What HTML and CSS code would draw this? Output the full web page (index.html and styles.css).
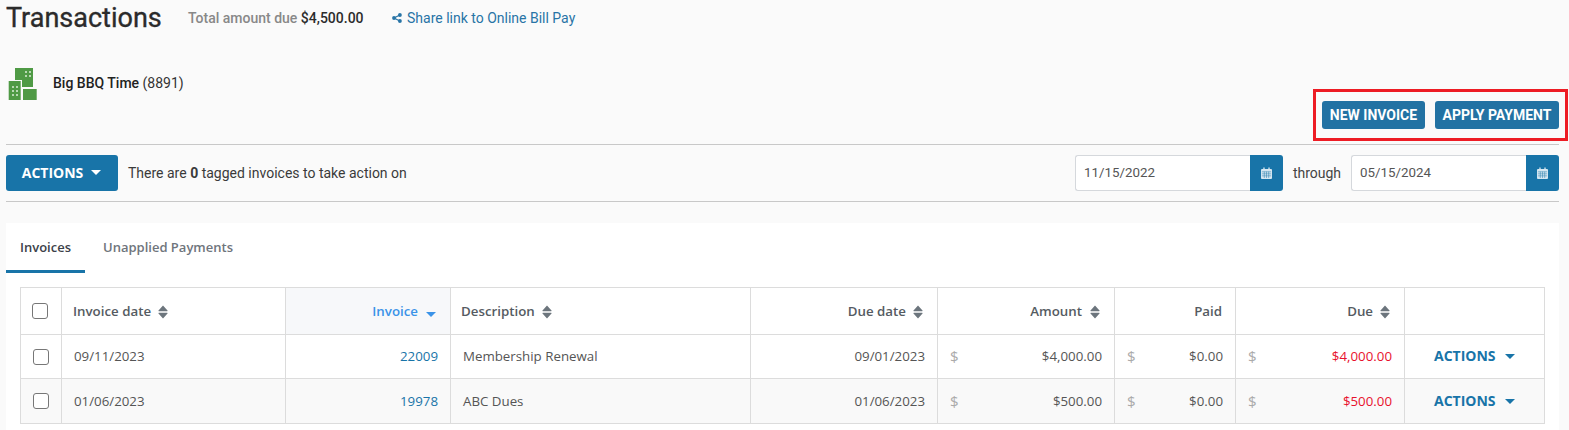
FILE: index.html
```html
<!DOCTYPE html>
<html lang="en">
<head>
<meta charset="utf-8">
<title>Transactions</title>
<link rel="stylesheet" href="styles.css">
</head>
<body>
<svg class="defs" width="0" height="0" aria-hidden="true">
  <symbol id="sort" viewBox="0 0 10 14"><path d="M5 0.5 9.5 5.5Q10 6.2 9 6.2H1Q0 6.2 .5 5.5Z M5 13.5 9.5 8.5Q10 7.8 9 7.8H1Q0 7.8 .5 8.5Z" fill="currentColor"/></symbol>
  <symbol id="cal" viewBox="0 0 12 13"><path d="M1 2h10a1 1 0 0 1 1 1v9a1 1 0 0 1-1 1H1a1 1 0 0 1-1-1V3a1 1 0 0 1 1-1z" fill="currentColor"/><path d="M2.5 0.5h1.500v2.500H2.500zM8 0.5h1.500v2.500H8z" fill="currentColor"/><path d="M1 5.200h10M1 7.400h10M1 9.600h10M3.600 5v7M6 5v7M8.400 5v7" stroke="#1874a8" stroke-width=".5" fill="none"/></symbol>
</svg>
<div class="page">
  <header class="top">
    <h1>Transactions</h1>
    <span class="total">Total amount due <b>$4,500.00</b></span>
    <a class="share" href="#">
      <svg width="10" height="10" viewBox="0 0 10 10"><path d="M7.800 2 2 5l5.800 3" stroke="currentColor" stroke-width="1.200" fill="none"/><circle cx="7.900" cy="2" r="1.900" fill="currentColor"/><circle cx="2" cy="5" r="1.900" fill="currentColor"/><circle cx="7.900" cy="8" r="1.900" fill="currentColor"/></svg>
      Share link to Online Bill Pay
    </a>
  </header>
  <div class="client">
    <svg class="bldg" width="30" height="32" viewBox="0 0 30 32">
      <path d="M7 0H25V19H14V12H7Z" fill="#4f9a45"/>
      <rect x="0.700" y="13" width="12" height="19" fill="#4f9a45"/>
      <rect x="15" y="21" width="13.700" height="11" fill="#4f9a45"/>
      <g fill="#b7d8b2">
        <rect x="17" y="3" width="2" height="2"/><rect x="21" y="3" width="2" height="2"/>
        <rect x="17" y="7" width="2" height="2"/><rect x="21" y="7" width="2" height="2"/>
        <rect x="4" y="18" width="2" height="2"/><rect x="8" y="18" width="2" height="2"/>
        <rect x="4" y="22" width="2" height="2"/><rect x="8" y="22" width="2" height="2"/>
        <rect x="4" y="26" width="2" height="2"/><rect x="8" y="26" width="2" height="2"/>
      </g>
    </svg>
    <span class="cname"><b>Big BBQ Time</b> (8891)</span>
  </div>
  <div class="btnrow">
    <div class="btns">
      <button class="btn">NEW INVOICE</button>
      <button class="btn">APPLY PAYMENT</button>
      <span class="mark"></span>
    </div>
  </div>
  <div class="toolbar">
    <button class="act">ACTIONS <i class="caret white"></i></button>
    <span class="tagged">There are <b>0</b> tagged invoices to take action on</span>
    <div class="dates">
      <div class="date"><input value="11/15/2022" aria-label="From"><span class="calbtn"><svg width="11" height="12"><use href="#cal"/></svg></span></div>
      <span class="thru">through</span>
      <div class="date"><input value="05/15/2024" aria-label="To"><span class="calbtn"><svg width="11" height="12"><use href="#cal"/></svg></span></div>
    </div>
  </div>
  <section class="card">
    <nav class="tabs">
      <a class="tab on" href="#">Invoices</a>
      <a class="tab" href="#">Unapplied Payments</a>
    </nav>
    <table>
      <colgroup>
        <col class="c1"><col class="c2"><col class="c3"><col class="c4"><col class="c5"><col class="c6"><col class="c7"><col class="c8"><col class="c9">
      </colgroup>
      <thead>
        <tr>
          <th class="chk"><input type="checkbox" aria-label="All"></th>
          <th>Invoice date<svg class="s"><use href="#sort"/></svg></th>
          <th class="r sorted">Invoice<i class="caret blue"></i></th>
          <th class="desc">Description<svg class="s"><use href="#sort"/></svg></th>
          <th class="r">Due date<svg class="s"><use href="#sort"/></svg></th>
          <th class="r amt">Amount<svg class="s"><use href="#sort"/></svg></th>
          <th class="r paid">Paid</th>
          <th class="r">Due<svg class="s"><use href="#sort"/></svg></th>
          <th></th>
        </tr>
      </thead>
      <tbody>
        <tr>
          <td class="chk"><input type="checkbox" aria-label="Select"></td>
          <td>09/11/2023</td>
          <td class="r"><a href="#">22009</a></td>
          <td>Membership Renewal</td>
          <td class="r">09/01/2023</td>
          <td><div class="money"><span>$</span>$4,000.00</div></td>
          <td><div class="money"><span>$</span>$0.00</div></td>
          <td><div class="money red"><span>$</span>$4,000.00</div></td>
          <td class="rowact">ACTIONS<i class="caret dark"></i></td>
        </tr>
        <tr>
          <td class="chk"><input type="checkbox" aria-label="Select"></td>
          <td>01/06/2023</td>
          <td class="r"><a href="#">19978</a></td>
          <td>ABC Dues</td>
          <td class="r">01/06/2023</td>
          <td><div class="money"><span>$</span>$500.00</div></td>
          <td><div class="money"><span>$</span>$0.00</div></td>
          <td><div class="money red"><span>$</span>$500.00</div></td>
          <td class="rowact">ACTIONS<i class="caret dark"></i></td>
        </tr>
      </tbody>
    </table>
  </section>
</div>
</body>
</html>
```
FILE: styles.css
```css
* { box-sizing: border-box; }
html, body { margin: 0; height: 430px; overflow: hidden; }
body { background: #fafafa; font-family: Roboto, "Liberation Sans", sans-serif; color: #333; }
.defs { position: absolute; }
.top { display: flex; align-items: center; height: 36px; padding-left: 6px; }
h1 { margin: 0; font-size: 27px; font-weight: 400; -webkit-text-stroke: .35px #2b2b2b; color: #2b2b2b; line-height: 36px; width: 182px; }
.total { font-size: 14px; color: #888; width: 204px; font-weight: 500; }
.total b { color: #2b2b2b; font-weight: 500; }
.share { font-size: 14px; color: #2874a6; text-decoration: none; display: flex; align-items: center; gap: 5px; }
.client { display: flex; height: 33px; margin-top: 32px; padding-left: 8px; }
.bldg { display: block; }
.cname { font-size: 14px; margin-left: 15px; padding-top: 7px; color: #333; }
.cname b { font-weight: 500; color: #222; }
.btnrow { display: flex; justify-content: flex-end; height: 44px; border-bottom: 1px solid #c8c8c8; margin-left: 6px; margin-right: 10px; }
.btns { position: relative; display: flex; gap: 10px; height: 28px; }
.btn { height: 28px; border: 0; border-radius: 3px; background: #2272a3; color: #fff; font: 700 14px Roboto, sans-serif; padding: 0 0 1px; }
.btn:first-child { width: 103px; }
.btn:nth-child(2) { width: 124px; }
.mark { position: absolute; left: -9px; right: -9px; top: -12px; bottom: -12px; border: 3px solid #ed1c24; pointer-events: none; }
.toolbar { display: flex; align-items: center; height: 57px; margin: 0 10px 0 6px; border-bottom: 1px solid #c8c8c8; }
.act { width: 112px; height: 36px; border: 0; border-radius: 3px; background: #1874a8; color: #fff; font: 700 14px "Open Sans", sans-serif; padding: 0 1px 2px 0; display: flex; align-items: center; justify-content: center; gap: 8px; }
.tagged { font-size: 14px; margin-left: 10px; color: #3a3a3a; }
.tagged b { font-weight: 700; }
.dates { margin-left: auto; display: flex; align-items: center; }
.date { display: flex; }
.date input { width: 175px; height: 36px; border: 1px solid #d5d8dc; border-right: 0; border-radius: 3px 0 0 3px; background: #fff; font: 400 13.33px Roboto, sans-serif; color: #555; padding: 0 8px 2px; outline: 0; }
.calbtn { width: 33px; height: 36px; background: #1874a8; border-radius: 0 3px 3px 0; display: flex; align-items: center; justify-content: center; color: #d5e6f0; }
.thru { font-size: 14px; color: #444; width: 68px; text-align: center; }
.card { background: #fff; margin: 21px 10px 0 6px; height: 207px; }
.tabs { display: flex; height: 50px; font: 600 13px "Open Sans", sans-serif; }
.tab { color: #6f757c; text-decoration: none; padding-top: 15px; width: 79px; }
.tab.on { color: #3b4149; text-align: center; border-bottom: 3px solid #1874a8; margin-right: 18px; }
.tab + .tab { width: auto; }
table { border-collapse: collapse; table-layout: fixed; width: 1524px; margin: 14px 0 0 14px; font: 400 13.3px "Open Sans", sans-serif; color: #555; }
.c1 { width: 41px; } .c2 { width: 224px; } .c3 { width: 165px; } .c4 { width: 300px; } .c5 { width: 187px; } .c6 { width: 177px; } .c7 { width: 121px; } .c8 { width: 169px; } .c9 { width: 140px; }
th, td { border: 1px solid #dcdcdc; padding: 0 12px; height: 44px; text-align: left; }
th { height: 47px; font-weight: 600; color: #555b62; font-size: 13.3px; padding-left: 11px; }
th.desc { padding-left: 10px; }
tbody tr:first-child td { padding-bottom: 2px; }
tbody tr:first-child td.chk { padding-bottom: 0; }
tbody tr:nth-child(2) { background: #f9f9f9; }
tbody tr:nth-child(2) td { height: 45px; }
tbody tr:nth-child(2) td.rowact { padding-bottom: 2px; }
.r { text-align: right; }
th.r { padding-right: 14px; }
th.paid { padding-right: 13px; }
.chk { padding: 0 0 0 12px; }
.chk input { appearance: none; display: block; width: 16px; height: 16px; margin: 0; border: 1px solid #777; border-radius: 3px; background: #fff; }
th.chk { padding-left: 11px; }
.s { width: 10px; height: 14px; margin-left: 7px; vertical-align: -3px; color: #6c757d; }
.amt .s { margin-left: 8px; }
th.sorted { background: #f7f8fa; color: #3b93e8; }
td a { color: #1874a8; text-decoration: none; }
.money { display: flex; justify-content: space-between; }
.money span { color: #aaa; font-size: 15px; line-height: 18px; }
.red { color: #e8112d; }
.rowact { padding-left: 29px; font-weight: 700; font-size: 14px; color: #1874a8; white-space: nowrap; }
.caret { display: inline-block; width: 0; height: 0; border-style: solid; border-width: 5px 5px 0; border-color: currentColor transparent transparent; }
.caret.white { color: #fff; }
.caret.blue { color: #3b93e8; margin-left: 8px; vertical-align: -1px; }
.caret.dark { color: #1874a8; margin-left: 9px; vertical-align: 2px; }
```
